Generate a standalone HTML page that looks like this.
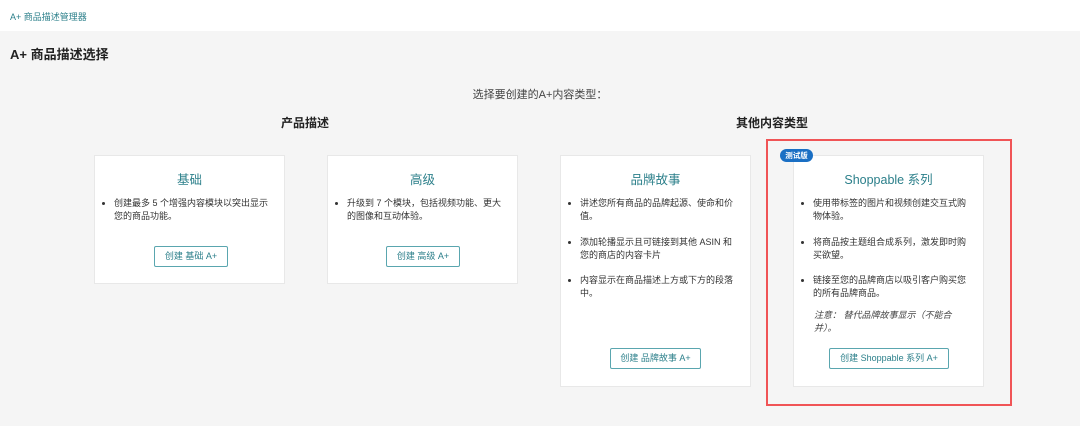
<!DOCTYPE html>
<html><head><meta charset="utf-8"><style>
*{margin:0;padding:0;box-sizing:border-box}
body{width:1080px;height:426px;background:#f5f5f5;font-family:"Liberation Sans","Noto Sans CJK SC",sans-serif;color:#333;position:relative;overflow:hidden}
.top{position:absolute;left:0;top:0;width:1080px;height:31px;background:#fff}
.top span{position:absolute;left:10px;top:10px;font-size:9px;color:#2b7f8a}
.t{position:absolute;left:10px;top:44px;font-size:13px;font-weight:bold;color:#222}
.sub{position:absolute;left:0;width:1080px;text-align:center;top:86px;font-size:11px;color:#444}
.h{position:absolute;top:114px;font-size:12px;font-weight:bold;color:#222;transform:translateX(-50%)}
.card{position:absolute;top:155px;width:191px;background:#fff;border:1px solid #e8e8e8}
.card .ct{position:absolute;top:13px;left:0;width:100%;text-align:center;font-size:12.5px;color:#2b7f8a}
.card ul{position:absolute;left:6px;right:12px;top:41px;list-style:none;font-size:9px;line-height:13px;color:#333}
.card li{position:relative;padding-left:13px;margin-bottom:12.5px}
.card li:before{content:"";position:absolute;left:1px;top:5px;width:3px;height:3px;border-radius:50%;background:#333}
.btn{position:absolute;height:21px;border:1px solid #5aa6af;border-radius:2px;font-size:9px;color:#2b7f8a;text-align:center;line-height:19px;background:#fff}
.note{position:absolute;left:20px;right:20px;top:153px;font-size:9px;line-height:13px;font-style:italic;color:#444}
.red{position:absolute;left:766px;top:139px;width:246px;height:267px;border:2px solid #f05456}
.badge{position:absolute;left:780px;top:149px;width:33px;height:13px;background:#1a6fc4;border-radius:7px;color:#fff;font-size:7.5px;text-align:center;line-height:13px;font-weight:bold}
</style></head><body>
<div class="top"><span>A+ 商品描述管理器</span></div>
<div class="t">A+ 商品描述选择</div>
<div class="sub">选择要创建的A+内容类型：</div>
<div class="h" style="left:305px">产品描述</div>
<div class="h" style="left:772px">其他内容类型</div>

<div class="card" style="left:94px;height:129px">
<div class="ct">基础</div>
<ul><li>创建最多 5 个增强内容模块以突出显示您的商品功能。</li></ul>
<div class="btn" style="left:59px;top:90px;width:74px">创建 基础 A+</div>
</div>
<div class="card" style="left:327px;height:129px">
<div class="ct">高级</div>
<ul><li>升级到 7 个模块，包括视频功能、更大的图像和互动体验。</li></ul>
<div class="btn" style="left:58px;top:90px;width:74px">创建 高级 A+</div>
</div>
<div class="card" style="left:560px;height:232px">
<div class="ct">品牌故事</div>
<ul><li>讲述您所有商品的品牌起源、使命和价值。</li><li>添加轮播显示且可链接到其他 ASIN 和您的商店的内容卡片</li><li>内容显示在商品描述上方或下方的段落中。</li></ul>
<div class="btn" style="left:49px;top:192px;width:91px">创建 品牌故事 A+</div>
</div>
<div class="card" style="left:793px;height:232px">
<div class="ct">Shoppable 系列</div>
<ul><li>使用带标签的图片和视频创建交互式购物体验。</li><li>将商品按主题组合成系列，激发即时购买欲望。</li><li>链接至您的品牌商店以吸引客户购买您的所有品牌商品。</li></ul>
<div class="note">注意： 替代品牌故事显示（不能合并）。</div>
<div class="btn" style="left:35px;top:192px;width:120px">创建 Shoppable 系列 A+</div>
</div>
<div class="red"></div>
<div class="badge">测试版</div>
</body></html>
